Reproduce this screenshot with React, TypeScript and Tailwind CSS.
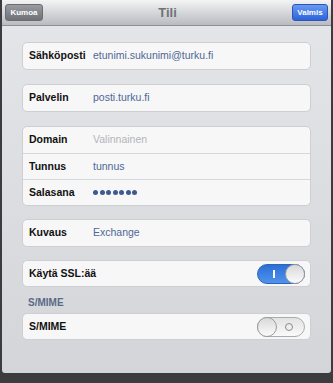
import React from 'react'

const font = { fontFamily: '"Liberation Sans", Arial, sans-serif' }

type Row = { label: string; value?: string; placeholder?: string; dots?: boolean }

function Group({ rows }: { rows: Row[] }) {
  return (
    <div className="mx-[20px] rounded-[5px] border border-[#cdcfd3] bg-[#f7f7f7]">
      {rows.map((r, i) => (
        <div
          key={r.label}
          className={`flex h-[26px] items-center pl-[6px] ${i > 0 ? 'border-t border-[#d6d7da]' : ''}`}
        >
          <div className="w-[64px] shrink-0 text-[10.5px] font-bold text-[#111]">{r.label}</div>
          {r.placeholder && <div className="text-[10.5px] text-[#b4b5b8]">{r.placeholder}</div>}
          {r.value && <div className="text-[10.5px] text-[#4e6796]">{r.value}</div>}
          {r.dots && (
            <div className="flex gap-[1.5px]">
              {Array.from({ length: 7 }).map((_, k) => (
                <span key={k} className="h-[5px] w-[5px] rounded-full bg-[#3f5a8f]" />
              ))}
            </div>
          )}
        </div>
      ))}
    </div>
  )
}

function Toggle({ on }: { on: boolean }) {
  if (on) {
    return (
      <div className="relative h-[20px] w-[48px] rounded-full border border-[#2f63b8] bg-gradient-to-b from-[#2b6fd6] to-[#4f93ee]">
        <span className="absolute left-[15px] top-[5px] h-[8px] w-[1.5px] bg-white" />
        <span className="absolute right-[-1px] top-[-1px] h-[20px] w-[20px] rounded-full border border-[#9a9ca0] bg-gradient-to-b from-[#d9d9d9] to-[#fbfbfb]" />
      </div>
    )
  }
  return (
    <div className="relative h-[20px] w-[48px] rounded-full border border-[#a9abaf] bg-gradient-to-b from-[#e2e2e2] to-[#fafafa]">
      <span className="absolute right-[11px] top-[5px] h-[8px] w-[8px] rounded-full border-[1.5px] border-[#8a8c90]" />
      <span className="absolute left-[-1px] top-[-1px] h-[20px] w-[20px] rounded-full border border-[#9a9ca0] bg-gradient-to-b from-[#d9d9d9] to-[#fbfbfb]" />
    </div>
  )
}

function ToggleGroup({ label, on }: { label: string; on: boolean }) {
  return (
    <div className="mx-[20px] flex h-[27px] items-center justify-between rounded-[5px] border border-[#cdcfd3] bg-[#f7f7f7] pl-[6px] pr-[5px]">
      <div className="text-[10.5px] font-bold text-[#111]">{label}</div>
      <Toggle on={on} />
    </div>
  )
}

export default function App() {
  return (
    <div className="h-[383px] w-[333px] overflow-hidden bg-[#3b3c3e]" style={font}>
      <div className="ml-[2px] flex h-[373px] w-[329px] flex-col overflow-hidden rounded-b-[3px] bg-gradient-to-b from-[#e4e6ea] to-[#d4d5d9]">
        <div className="flex h-[26px] items-center justify-between border-b border-[#8e9095] bg-gradient-to-b from-[#f4f4f5] to-[#b9bbc0] px-[3px]">
          <div className="flex h-[17px] w-[38px] items-center justify-center rounded-[3px] border border-[#6a6c70] bg-gradient-to-b from-[#9a9ca1] to-[#6e7075] text-[8px] font-bold text-white">
            Kumoa
          </div>
          <div className="text-[13px] font-bold text-[#707276]">Tili</div>
          <div className="flex h-[17px] w-[36px] items-center justify-center rounded-[3px] border border-[#2c55b4] bg-gradient-to-b from-[#6a9af2] to-[#2c62db] text-[8px] font-bold text-white">
            Valmis
          </div>
        </div>
        <div className="flex flex-col pt-[16px]">
          <Group rows={[{ label: 'Sähköposti', value: 'etunimi.sukunimi@turku.fi' }]} />
          <div className="h-[14px]" />
          <Group rows={[{ label: 'Palvelin', value: 'posti.turku.fi' }]} />
          <div className="h-[14px]" />
          <Group
            rows={[
              { label: 'Domain', placeholder: 'Valinnainen' },
              { label: 'Tunnus', value: 'tunnus' },
              { label: 'Salasana', dots: true },
            ]}
          />
          <div className="h-[13px]" />
          <Group rows={[{ label: 'Kuvaus', value: 'Exchange' }]} />
          <div className="h-[13px]" />
          <ToggleGroup label="Käytä SSL:ää" on />
          <div className="pl-[26px] pt-[8px] pb-[3px] text-[10px] font-bold text-[#5a6986]">S/MIME</div>
          <ToggleGroup label="S/MIME" on={false} />
        </div>
      </div>
    </div>
  )
}
